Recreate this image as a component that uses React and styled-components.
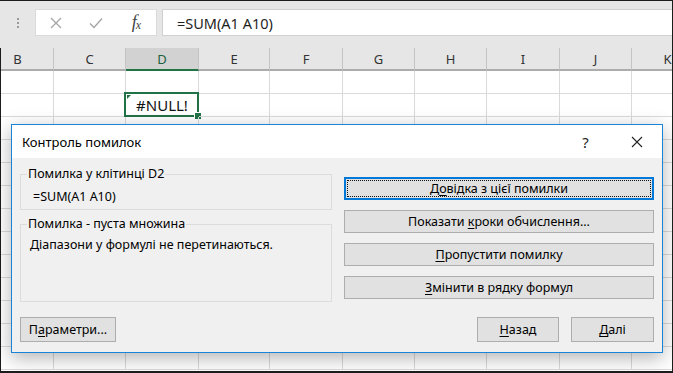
import React from "react";
import styled, { createGlobalStyle } from "styled-components";

const GlobalStyle = createGlobalStyle`
  html, body { margin: 0; padding: 0; background: #fff; }
  body { font-family: "Noto Sans", "Open Sans", sans-serif; }
`;

const Screen = styled.div`
  position: relative;
  width: 673px;
  height: 373px;
  box-sizing: border-box;
  overflow: hidden;
  border-top: 1px solid #1c1c1c;
  border-right: 1px solid #1c1c1c;
  border-bottom: 2px solid #1c1c1c;
  display: flex;
  flex-direction: column;
  background: #fff;
`;

const FormulaBar = styled.div`
  height: 47px;
  flex-shrink: 0;
  box-sizing: border-box;
  background: #e6e6e6;
  display: flex;
  align-items: flex-start;
  padding-top: 8px;
`;

const Grip = styled.div`
  width: 35px;
  height: 27px;
  display: flex;
  flex-direction: column;
  align-items: center;
  justify-content: center;
  gap: 2px;
  span {
    width: 2px;
    height: 2px;
    background: #9a9a9a;
  }
`;

const ActionBox = styled.div`
  width: 122px;
  height: 27px;
  box-sizing: border-box;
  background: #fff;
  border: 1px solid #dadada;
  display: flex;
`;

const ActionSlot = styled.div`
  width: 40px;
  display: flex;
  align-items: center;
  justify-content: center;
  color: #a6a6a6;
`;

const Fx = styled.span`
  font-family: "Liberation Serif", serif;
  font-style: italic;
  font-size: 18px;
  color: #444;
  letter-spacing: -1px;
  sub {
    font-size: 12px;
    vertical-align: -1px;
  }
`;

const FormulaInput = styled.div`
  flex: 1;
  margin-left: 5px;
  height: 27px;
  box-sizing: border-box;
  background: #fff;
  border: 1px solid #d0d0d0;
  border-right: none;
  padding-left: 14px;
  display: flex;
  align-items: center;
  font-size: 14.5px;
  color: #1e1e1e;
`;

const SheetArea = styled.div`
  flex: 1;
  border-left: 1px solid #1c1c1c;
  overflow: hidden;
`;

const Row = styled.div`
  display: flex;
  margin-left: -19px;
`;

const HeadCell = styled.div`
  flex: 0 0 ${(p) => p.$w}px;
  height: 23px;
  box-sizing: border-box;
  background: ${(p) => (p.$active ? "#d2d2d2" : "#e6e6e6")};
  border-right: 1px solid #c4c4c4;
  border-bottom: 2px solid ${(p) => (p.$active ? "#217346" : "#acacac")};
  display: flex;
  align-items: center;
  justify-content: center;
  font-size: 13px;
  color: ${(p) => (p.$active ? "#1b5e3b" : "#333")};
`;

const Cell = styled.div`
  position: relative;
  flex: 0 0 ${(p) => p.$w}px;
  height: 23px;
  box-sizing: border-box;
  border-right: 1px solid #dadada;
  border-bottom: 1px solid #dadada;
  display: flex;
  align-items: center;
  justify-content: center;
  font-size: 15px;
  color: #111;
`;

const Selection = styled.div`
  position: absolute;
  top: -2px;
  left: -2px;
  right: -1px;
  bottom: -1px;
  border: 2px solid #217346;
  pointer-events: none;
  &::before {
    content: "";
    position: absolute;
    top: 1px;
    left: 1px;
    border-top: 4px solid #217346;
    border-right: 4px solid transparent;
  }
  &::after {
    content: "";
    position: absolute;
    right: -5px;
    bottom: -5px;
    width: 6px;
    height: 6px;
    background: #217346;
    border: 1px solid #fff;
  }
`;

const Dialog = styled.div`
  position: absolute;
  left: 11px;
  top: 123px;
  width: 652px;
  height: 229px;
  box-sizing: border-box;
  border: 1px solid #1883d7;
  background: #f0f0f0;
  box-shadow: 0 5px 18px rgba(0, 0, 0, 0.3);
  display: flex;
  flex-direction: column;
  font-size: 12.5px;
  color: #000;
`;

const TitleBar = styled.div`
  height: 33px;
  flex-shrink: 0;
  background: #fff;
  display: flex;
  align-items: center;
  padding-left: 10px;
`;

const Title = styled.div`
  flex: 1;
  font-size: 13px;
`;

const TitleButton = styled.div`
  width: 51px;
  height: 33px;
  display: flex;
  align-items: center;
  justify-content: center;
  font-size: 15px;
  color: #222;
`;

const Body = styled.div`
  flex: 1;
  padding: 0 8px 10px;
  display: flex;
  flex-direction: column;
`;

const Main = styled.div`
  display: flex;
  justify-content: space-between;
  height: 144px;
`;

const LeftColumn = styled.div`
  width: 312px;
  padding-top: 8px;
  display: flex;
  flex-direction: column;
  gap: 6px;
`;

const Group = styled.fieldset`
  margin: 0;
  height: ${(p) => p.$h}px;
  box-sizing: border-box;
  border: 1px solid #dcdcdc;
  padding: ${(p) => p.$pt}px 6px 0 ${(p) => p.$pl}px;
  min-inline-size: 0;
`;

const Legend = styled.legend`
  margin-left: -${(p) => p.$shift}px;
  padding: 0 1px;
  line-height: 16px;
`;

const GroupText = styled.div`
  line-height: 16px;
`;

const RightColumn = styled.div`
  width: 310px;
  padding-top: 19px;
  display: flex;
  flex-direction: column;
  gap: 10px;
`;

const Button = styled.div`
  position: relative;
  width: ${(p) => (p.$w ? `${p.$w}px` : "auto")};
  height: ${(p) => p.$h || 23}px;
  box-sizing: border-box;
  background: #e1e1e1;
  border: 1px solid ${(p) => (p.$focused ? "#0078d7" : "#adadad")};
  box-shadow: ${(p) => (p.$focused ? "inset 0 0 0 1px #0078d7" : "none")};
  display: flex;
  align-items: center;
  justify-content: center;
  outline: ${(p) => (p.$focused ? "1px dotted #111" : "none")};
  outline-offset: -4px;
`;

const Key = styled.span`
  text-decoration: underline;
  text-underline-offset: 2px;
`;

const Footer = styled.div`
  margin-top: 15px;
  display: flex;
  align-items: center;
  gap: 12px;
`;

const Spacer = styled.div`
  flex: 1;
`;

const columns = [
  { name: "B", w: 72 },
  { name: "C", w: 72 },
  { name: "D", w: 73 },
  { name: "E", w: 71 },
  { name: "F", w: 73 },
  { name: "G", w: 72 },
  { name: "H", w: 72 },
  { name: "I", w: 73 },
  { name: "J", w: 72 },
  { name: "K", w: 72 },
];

const rows = Array.from({ length: 13 }, (_, i) => i + 1);

const CloseIcon = ({ size = 12, color = "currentColor", width = 1 }) => (
  <svg width={size} height={size} viewBox="0 0 12 12">
    <path d="M1 1 L11 11 M11 1 L1 11" stroke={color} strokeWidth={width} fill="none" />
  </svg>
);

const CheckIcon = () => (
  <svg width="14" height="12" viewBox="0 0 14 12">
    <path d="M1 6.5 L5 10.5 L13 1.5" stroke="#a6a6a6" strokeWidth="1.4" fill="none" />
  </svg>
);

export default function App() {
  return (
    <>
      <GlobalStyle />
      <Screen>
        <FormulaBar>
          <Grip>
            <span />
            <span />
            <span />
          </Grip>
          <ActionBox>
            <ActionSlot>
              <CloseIcon size={12} color="#a6a6a6" width={1.3} />
            </ActionSlot>
            <ActionSlot>
              <CheckIcon />
            </ActionSlot>
            <ActionSlot>
              <Fx>
                f<sub>x</sub>
              </Fx>
            </ActionSlot>
          </ActionBox>
          <FormulaInput>=SUM(A1 A10)</FormulaInput>
        </FormulaBar>

        <SheetArea>
          <Row>
            {columns.map((c) => (
              <HeadCell key={c.name} $w={c.w} $active={c.name === "D"}>
                {c.name}
              </HeadCell>
            ))}
          </Row>
          {rows.map((r) => (
            <Row key={r}>
              {columns.map((c) => {
                const selected = r === 2 && c.name === "D";
                return (
                  <Cell key={c.name} $w={c.w}>
                    {selected && "#NULL!"}
                    {selected && <Selection />}
                  </Cell>
                );
              })}
            </Row>
          ))}
        </SheetArea>

        <Dialog>
          <TitleBar>
            <Title>Контроль помилок</Title>
            <TitleButton>?</TitleButton>
            <TitleButton>
              <CloseIcon size={12} color="#222" width={1.1} />
            </TitleButton>
          </TitleBar>
          <Body>
            <Main>
              <LeftColumn>
                <Group $h={44} $pt={7} $pl={12}>
                  <Legend $shift={6}>Помилка у клітинці D2</Legend>
                  <GroupText>=SUM(A1 A10)</GroupText>
                </Group>
                <Group $h={86} $pt={5} $pl={9}>
                  <Legend $shift={3}>Помилка - пуста множина</Legend>
                  <GroupText>Діапазони у формулі не перетинаються.</GroupText>
                </Group>
              </LeftColumn>
              <RightColumn>
                <Button $focused>
                  <span>
                    Д<Key>о</Key>відка з цієї помилки
                  </span>
                </Button>
                <Button>
                  <span>
                    Показати <Key>к</Key>роки обчислення...
                  </span>
                </Button>
                <Button>
                  <span>
                    <Key>П</Key>ропустити помилку
                  </span>
                </Button>
                <Button>
                  <span>
                    <Key>З</Key>мінити в рядку формул
                  </span>
                </Button>
              </RightColumn>
            </Main>
            <Footer>
              <Button $w={96} $h={25}>
                <span>
                  П<Key>а</Key>раметри...
                </span>
              </Button>
              <Spacer />
              <Button $w={82} $h={25}>
                <span>
                  <Key>Н</Key>азад
                </span>
              </Button>
              <Button $w={83} $h={25}>
                <span>
                  <Key>Д</Key>алі
                </span>
              </Button>
            </Footer>
          </Body>
        </Dialog>
      </Screen>
    </>
  );
}
